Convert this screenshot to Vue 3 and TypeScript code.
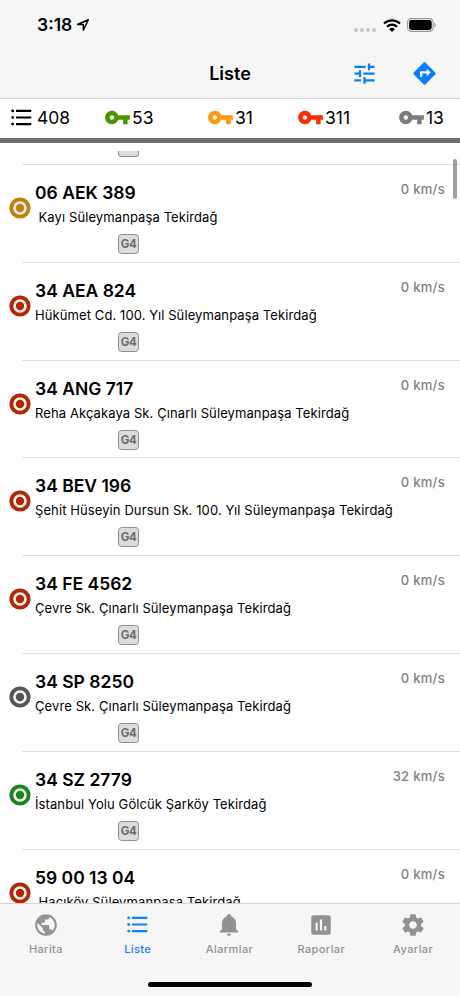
<script setup lang="ts">
type Status = 'idle' | 'stopped' | 'offline' | 'moving'

interface Vehicle {
  plate: string
  address: string
  speed: number
  status: Status
  indented?: boolean
}

const ringColors: Record<Status, string> = {
  idle: '#c17f0b',
  stopped: '#b12708',
  offline: '#555555',
  moving: '#1c8322',
}

const counters = [
  { id: 'green', color: '#4b9400', count: 53 },
  { id: 'orange', color: '#ff970f', count: 31 },
  { id: 'red', color: '#fb2c00', count: 311 },
  { id: 'gray', color: '#7d7d7d', count: 13 },
]

const vehicles: Vehicle[] = [
  { plate: '06 AEK 389', address: 'Kayı Süleymanpaşa Tekirdağ', speed: 0, status: 'idle', indented: true },
  { plate: '34 AEA 824', address: 'Hükümet Cd. 100. Yıl Süleymanpaşa Tekirdağ', speed: 0, status: 'stopped' },
  { plate: '34 ANG 717', address: 'Reha Akçakaya Sk. Çınarlı Süleymanpaşa Tekirdağ', speed: 0, status: 'stopped' },
  { plate: '34 BEV 196', address: 'Şehit Hüseyin Dursun Sk. 100. Yıl Süleymanpaşa Tekirdağ', speed: 0, status: 'stopped' },
  { plate: '34 FE 4562', address: 'Çevre Sk. Çınarlı Süleymanpaşa Tekirdağ', speed: 0, status: 'stopped' },
  { plate: '34 SP 8250', address: 'Çevre Sk. Çınarlı Süleymanpaşa Tekirdağ', speed: 0, status: 'offline' },
  { plate: '34 SZ 2779', address: 'İstanbul Yolu Gölcük Şarköy Tekirdağ', speed: 32, status: 'moving' },
  { plate: '59 00 13 04', address: 'Hacıköy Süleymanpaşa Tekirdağ', speed: 0, status: 'stopped', indented: true },
]

const listIcon =
  'M2.8 3.6a1.5 1.5 0 1 0 0 3 1.5 1.5 0 0 0 0-3zm0 6.9a1.5 1.5 0 1 0 0 3 1.5 1.5 0 0 0 0-3zm0 6.9a1.5 1.5 0 1 0 0 3 1.5 1.5 0 0 0 0-3zM6.2 4h16v2.200h-16zm0 6.900h16v2.200h-16zm0 6.900h16v2.200h-16z'

const tabs = [
  {
    label: 'Harita',
    icon: 'M12 2C6.48 2 2 6.48 2 12s4.48 10 10 10 10-4.48 10-10S17.52 2 12 2zm-1 17.93c-3.95-.49-7-3.85-7-7.93 0-.62.08-1.21.21-1.79L9 15v1c0 1.1.9 2 2 2v1.93zm6.9-2.54c-.26-.81-1-1.39-1.9-1.39h-1v-3c0-.55-.45-1-1-1H8v-2h2c.55 0 1-.45 1-1V7h2c1.1 0 2-.9 2-2v-.41c2.93 1.19 5 4.06 5 7.41 0 2.08-.8 3.97-2.1 5.39z',
  },
  { label: 'Liste', icon: listIcon, active: true },
  {
    label: 'Alarmlar',
    icon: 'M12 22c1.1 0 2-.9 2-2h-4c0 1.1.89 2 2 2zm6.500-6v-5.500c0-3.070-1.640-5.640-4.500-6.320V3.500c0-.83-.67-1.500-1.500-1.500h-1c-.83 0-1.500.67-1.500 1.500v.68C7.130 4.860 5.500 7.420 5.500 10.500V16l-2 2v1h17v-1l-2-2z',
  },
  {
    label: 'Raporlar',
    icon: 'M19 3H5c-1.100 0-2 .9-2 2v14c0 1.100.9 2 2 2h14c1.100 0 2-.9 2-2V5c0-1.100-.9-2-2-2zM9 17H7v-7h2v7zm4 0h-2V7h2v10zm4 0h-2v-4h2v4z',
  },
  {
    label: 'Ayarlar',
    icon: 'M19.430 12.980c.04-.32.07-.64.07-.98s-.03-.66-.07-.98l2.110-1.650c.19-.15.24-.42.12-.64l-2-3.460c-.12-.22-.39-.3-.61-.22l-2.490 1c-.52-.4-1.080-.73-1.690-.98l-.38-2.650C14.460 2.180 14.250 2 14 2h-4c-.25 0-.46.18-.49.42l-.38 2.650c-.61.25-1.170.59-1.690.98l-2.490-1c-.23-.09-.49 0-.61.22l-2 3.460c-.13.22-.07.49.12.64l2.110 1.650c-.04.32-.07.65-.07.98s.03.66.07.98l-2.110 1.650c-.19.15-.24.42-.12.64l2 3.460c.12.22.39.3.61.22l2.490-1c.52.4 1.080.73 1.690.98l.38 2.650c.03.24.24.42.49.42h4c.25 0 .46-.18.49-.42l.38-2.650c.61-.25 1.170-.59 1.690-.98l2.490 1c.23.09.49 0 .61-.22l2-3.460c.12-.22.07-.49-.12-.64l-2.110-1.650zM12 15.500c-1.930 0-3.500-1.570-3.500-3.500s1.570-3.500 3.500-3.500 3.500 1.570 3.500 3.500-1.570 3.500-3.500 3.500z',
  },
]
</script>

<template>
  <div class="screen">
    <header class="header">
      <div class="status-bar">
        <div class="clock">
          <span>3:18</span>
          <svg class="location" viewBox="0 0 14 14">
            <path d="M12.300 1.700 1.500 6.500h5.800v5.800z" fill="none" stroke="#000" stroke-width="1.500" stroke-linejoin="round" />
          </svg>
        </div>
        <div class="indicators">
          <div class="signal"><i v-for="n in 4" :key="n"></i></div>
          <svg class="wifi" viewBox="0 0 18 13">
            <g fill="none" stroke="#000" stroke-width="2.200">
              <path d="M1 4.500a11.600 11.600 0 0 1 16 0" />
              <path d="M4 7.700a7.300 7.300 0 0 1 10 0" />
            </g>
            <path d="M9 13 6.200 10.200a4 4 0 0 1 5.600 0z" />
          </svg>
          <svg class="battery" viewBox="0 0 30 14">
            <rect x=".6" y=".6" width="25.600" height="12.800" rx="3.800" fill="none" stroke="#979797" stroke-width="1.100" />
            <rect x="2.100" y="2.100" width="22.600" height="9.800" rx="2.300" />
            <path d="M27.500 4.800c1.700.7 1.700 3.700 0 4.400z" fill="#8d8d8d" />
          </svg>
        </div>
      </div>
      <div class="nav">
        <h1>Liste</h1>
        <div class="actions">
          <svg viewBox="0 0 24 24"><path d="M3 17v2h6v-2H3zM3 5v2h10V5H3zm10 16v-2h8v-2h-8v-2h-2v6h2zM7 9v2H3v2h4v2h2V9H7zm14 4v-2H11v2h10zm-6-4h2V7h4V5h-4V3h-2v6z" /></svg>
          <svg viewBox="0 0 24 24"><path d="M21.710 11.290l-9-9c-.39-.39-1.020-.39-1.410 0l-9 9c-.39.39-.39 1.020 0 1.410l9 9c.39.39 1.020.39 1.410 0l9-9c.39-.38.39-1.010 0-1.410zM14 14.500V12h-4v3H8v-4c0-.55.45-1 1-1h5V7.500l3.500 3.500-3.500 3.500z" /></svg>
        </div>
      </div>
    </header>

    <section class="counters">
      <div class="counter total">
        <svg viewBox="0 0 24 24"><path :d="listIcon" /></svg>
        <span>408</span>
      </div>
      <div v-for="c in counters" :key="c.id" class="counter" :class="c.id">
        <svg viewBox="0 0 24 24" :fill="c.color">
          <path d="M12.650 10C11.830 7.670 9.610 6 7 6c-3.310 0-6 2.690-6 6s2.690 6 6 6c2.610 0 4.830-1.670 5.650-4H17v4h4v-4h2v-4H12.650zM7 14c-1.100 0-2-.9-2-2s.9-2 2-2 2 .9 2 2-.9 2-2 2z" />
        </svg>
        <span>{{ c.count }}</span>
      </div>
    </section>

    <main class="list">
      <div class="leading">
        <div class="badge-edge"></div>
      </div>
      <article v-for="v in vehicles" :key="v.plate" class="row">
        <svg class="ring" viewBox="0 0 22 22">
          <circle cx="11" cy="11" r="10.600" :fill="ringColors[v.status]" />
          <circle cx="11" cy="11" r="5.500" :fill="ringColors[v.status]" stroke="#f8f2ec" stroke-width="2.600" />
        </svg>
        <div class="details">
          <h2>{{ v.plate }}</h2>
          <p :class="{ indented: v.indented }">{{ v.address }}</p>
          <div class="badge">G4</div>
        </div>
        <span class="speed">{{ v.speed }} km/s</span>
      </article>
      <div class="scrollbar"></div>
    </main>

    <footer class="footer">
      <nav class="tabs">
        <div v-for="t in tabs" :key="t.label" class="tab" :class="{ active: t.active }">
          <svg viewBox="0 0 24 24"><path :d="t.icon" /></svg>
          <span>{{ t.label }}</span>
        </div>
      </nav>
      <div class="home"></div>
    </footer>
  </div>
</template>

<style>
body {
  margin: 0;
  background: #fff;
}
</style>

<style scoped>
.screen {
  width: 460px;
  height: 996px;
  display: flex;
  flex-direction: column;
  overflow: hidden;
  background: #fff;
  color: #000;
  font-family: Inter, 'Liberation Sans', sans-serif;
}
svg {
  display: block;
  flex: none;
}
h1,
h2,
p {
  margin: 0;
}
.header {
  box-sizing: border-box;
  height: 99px;
  flex: none;
  background: #f7f6f7;
  border-bottom: 1px solid #d6d6d7;
}
.status-bar {
  height: 50px;
  display: flex;
  justify-content: space-between;
  align-items: center;
  padding: 0 23px 0 37px;
}
.clock {
  display: flex;
  align-items: center;
  gap: 4px;
  font-size: 17.5px;
  font-weight: 600;
  line-height: 24px;
}
.location {
  width: 14px;
  height: 14px;
}
.indicators {
  display: flex;
  align-items: center;
}
.signal {
  display: flex;
  gap: 2px;
  padding-top: 10px;
  margin-right: 7px;
}
.signal i {
  width: 4px;
  height: 4px;
  border-radius: 50%;
  background: #c6c6c6;
}
.wifi {
  width: 18px;
  height: 13px;
  margin-right: 6px;
}
.battery {
  width: 30px;
  height: 14px;
}
.nav {
  height: 46px;
  display: grid;
  grid-template-columns: 1fr auto 1fr;
  align-items: center;
  padding-right: 22px;
  padding-left: 22px;
}
h1 {
  grid-column: 2;
  font-size: 18px;
  line-height: 24px;
  padding-top: 1px;
  font-weight: 600;
}
.actions {
  display: flex;
  justify-content: flex-end;
  gap: 33px;
  fill: #087dfc;
}
.actions svg {
  width: 27px;
  height: 27px;
}
.counters {
  box-sizing: border-box;
  height: 44px;
  flex: none;
  display: grid;
  grid-template-columns: 94px 103px 90px 101px 62px;
  padding-left: 10px;
  padding-bottom: 1.5px;
  background: #fff;
  border-bottom: 5px solid #6d7073;
}
.counter {
  display: flex;
  align-items: center;
  font-size: 17.5px;
}
.counter svg {
  width: 27px;
  height: 27px;
  margin-right: 1px;
}
.counter.total svg {
  width: 23px;
  height: 23px;
  margin-right: 4px;
}
.list {
  position: relative;
  height: 752px;
  margin-top: 8px;
  flex: none;
  overflow: hidden;
}
.leading,
.row {
  box-sizing: border-box;
  background: linear-gradient(#e1e1e1, #e1e1e1) 22px 100% / 100% 1px no-repeat;
}
.leading {
  height: 14px;
  padding-left: 118px;
}
.badge-edge {
  box-sizing: border-box;
  width: 21px;
  height: 6px;
  border: solid #8e8e8e;
  border-width: 0 1.5px 1.5px;
  border-radius: 0 0 3.5px 3.5px;
  background: #dcdcdc;
}
.row {
  height: 97.8px;
  display: grid;
  grid-template-columns: 26px 1fr auto;
  padding: 0 15px 0 9px;
}
.ring {
  width: 22px;
  height: 22px;
  margin-top: 32px;
}
h2 {
  margin-top: 17px;
  font-size: 17.5px;
  line-height: 22px;
  font-weight: 600;
  white-space: nowrap;
}
p {
  margin-top: 4px;
  font-size: 13px;
  line-height: 18px;
  letter-spacing: 0.1px;
  white-space: nowrap;
}
p.indented {
  padding-left: 3.5px;
}
.badge {
  box-sizing: border-box;
  width: 21px;
  height: 20px;
  margin: 8px 0 0 83px;
  border: 1.5px solid #8e8e8e;
  border-radius: 3.5px;
  background: #dcdcdc;
  color: #6c6c6c;
  font-size: 11.5px;
  font-weight: 700;
  line-height: 18px;
  text-align: center;
  letter-spacing: -0.5px;
}
.speed {
  padding-top: 14px;
  font-size: 13px;
  line-height: 20px;
  font-weight: 500;
  letter-spacing: 0.3px;
  color: #808080;
}
.scrollbar {
  position: absolute;
  top: 8px;
  right: 3px;
  width: 4px;
  height: 40px;
  border-radius: 2px;
  background: rgba(100, 100, 100, 0.62);
}
.footer {
  box-sizing: border-box;
  height: 93px;
  flex: none;
  background: #f7f6f7;
  border-top: 1px solid #d3d3d4;
}
.tabs {
  display: grid;
  grid-template-columns: repeat(5, 91.8px);
  height: 78px;
}
.tab {
  display: flex;
  flex-direction: column;
  align-items: center;
  padding-top: 7.5px;
  color: #929292;
  fill: #929292;
}
.tab svg {
  width: 26px;
  height: 26px;
}
.tab.active svg {
  width: 23px;
  height: 23px;
  margin: 1.5px 0;
}
.tab span {
  margin-top: 3.5px;
  font-size: 11px;
  line-height: 16px;
  font-weight: 500;
  letter-spacing: 0.4px;
}
.tab.active {
  color: #117efa;
  fill: #117efa;
}
.home {
  width: 164px;
  height: 5px;
  margin: 0 auto;
  border-radius: 3px;
  background: #000;
}
</style>
